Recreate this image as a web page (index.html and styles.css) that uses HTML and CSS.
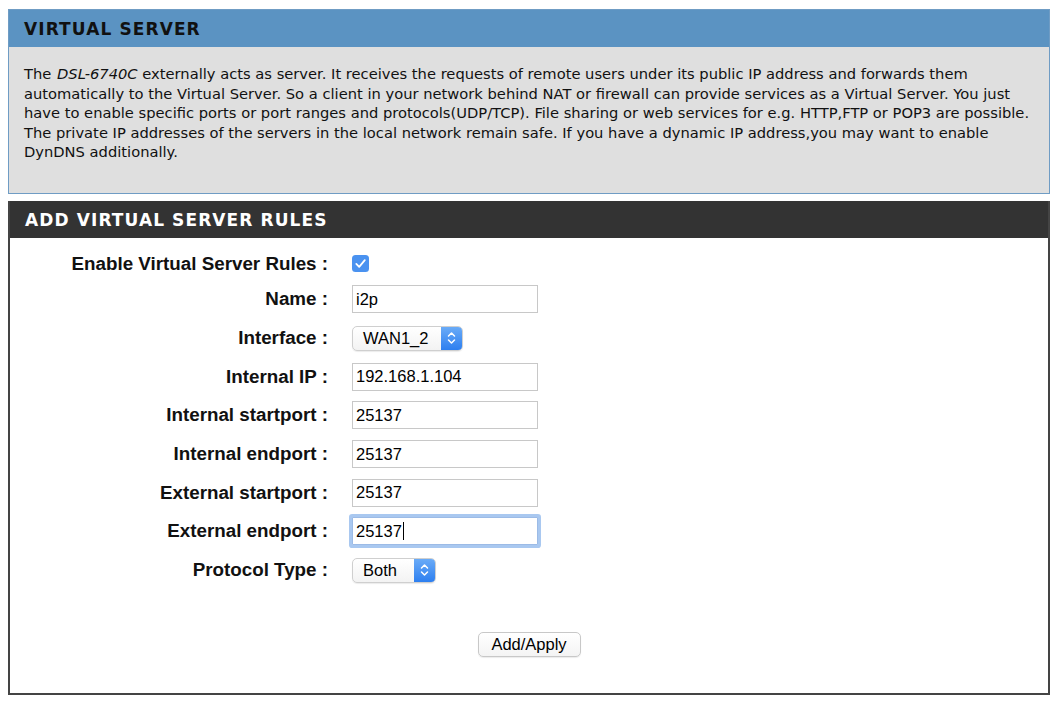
FILE: index.html
```html
<!DOCTYPE html>
<html>
<head>
<meta charset="utf-8">
<link rel="stylesheet" href="styles.css">
</head>
<body>
<div class="box info">
  <div class="box-head">VIRTUAL SERVER</div>
  <div class="box-body">
    <p class="desc">The <i class="model">DSL-6740C</i> externally acts as server. It receives the requests of remote users under its public IP address and forwards them automatically to the Virtual Server. So a client in your network behind NAT or firewall can provide services as a Virtual Server. You just have to enable specific ports or port ranges and protocols(UDP/TCP). File sharing or web services for e.g. HTTP,FTP or POP3 are possible. The private IP addresses of the servers in the local network remain safe. If you have a dynamic IP address,you may want to enable DynDNS additionally.</p>
  </div>
</div>

<div class="box rules">
  <div class="box-head dark">ADD VIRTUAL SERVER RULES</div>
  <div class="form">
    <div class="row first">
      <label class="lbl">Enable Virtual Server Rules :</label>
      <span class="check"><svg width="17" height="17" viewBox="0 0 17 17"><rect x="0" y="0" width="17" height="17" rx="3.5" fill="#4a92f0"/><path d="M4.3 8.9 L7.2 11.8 L12.8 5.2" fill="none" stroke="#fff" stroke-width="1.8" stroke-linecap="round" stroke-linejoin="round"/></svg></span>
    </div>
    <div class="row">
      <label class="lbl">Name :</label>
      <span class="input">i2p</span>
    </div>
    <div class="row">
      <label class="lbl">Interface :</label>
      <span class="select wide"><span class="sel-text">WAN1_2</span><span class="stepper"><svg width="9" height="14" viewBox="0 0 9 14"><path d="M1.5 5 L4.5 2 L7.5 5 M1.5 9 L4.5 12 L7.5 9" fill="none" stroke="#fff" stroke-width="1.5" stroke-linecap="round" stroke-linejoin="round"/></svg></span></span>
    </div>
    <div class="row">
      <label class="lbl">Internal IP :</label>
      <span class="input">192.168.1.104</span>
    </div>
    <div class="row">
      <label class="lbl">Internal startport :</label>
      <span class="input">25137</span>
    </div>
    <div class="row">
      <label class="lbl">Internal endport :</label>
      <span class="input">25137</span>
    </div>
    <div class="row">
      <label class="lbl">External startport :</label>
      <span class="input">25137</span>
    </div>
    <div class="row">
      <label class="lbl">External endport :</label>
      <span class="input focus">25137<span class="caret"></span></span>
    </div>
    <div class="row">
      <label class="lbl">Protocol Type :</label>
      <span class="select narrow"><span class="sel-text">Both</span><span class="stepper"><svg width="9" height="14" viewBox="0 0 9 14"><path d="M1.5 5 L4.5 2 L7.5 5 M1.5 9 L4.5 12 L7.5 9" fill="none" stroke="#fff" stroke-width="1.5" stroke-linecap="round" stroke-linejoin="round"/></svg></span></span>
    </div>
    <div class="actions">
      <span class="button">Add/Apply</span>
    </div>
  </div>
</div>
</body>
</html>
```
FILE: styles.css
```css
html, body {
  margin: 0;
  padding: 0;
  background: #ffffff;
}
body {
  padding: 9px 8px 0 8px;
  font-family: "DejaVu Sans", sans-serif;
  color: #000;
}
.box {
  box-sizing: border-box;
  width: 1042px;
}
.info {
  border: 1px solid #6f9cc4;
  background: #dfdfdf;
  height: 185px;
}
.box-head {
  background: #5b93c2;
  height: 37px;
  display: flex;
  align-items: center;
  padding-left: 15px;
  font-family: "DejaVu Sans", sans-serif;
  font-weight: bold;
  font-size: 17px;
  letter-spacing: 1.1px;
  color: #111;
}
.box-head.dark {
  background: #333333;
  color: #fff;
  height: 37px;
}
.box-body {
  padding: 17px 15px 0 15px;
}
.desc {
  margin: 0;
  font-size: 14.7px;
  line-height: 19.5px;
  color: #111;
}
.model {
  display: inline-block;
  padding-left: 1px;
}
.rules {
  margin-top: 7px;
  border: 2px solid #444;
  border-top: 0;
  height: 494px;
  background: #fff;
}
.form {
  padding-top: 9px;
  font-family: "Liberation Sans", Arial, sans-serif;
}
.row {
  display: flex;
  align-items: center;
  height: 38.7px;
}
.row.first {
  height: 33px;
}
.lbl {
  width: 318px;
  text-align: right;
  font-weight: bold;
  font-size: 18.8px;
  padding-right: 24px;
  color: #111;
}
.check {
  display: flex;
}
.input {
  box-sizing: border-box;
  width: 186px;
  height: 28px;
  border: 1px solid #c8c8c8;
  background: #fff;
  font-size: 16.5px;
  display: flex;
  align-items: center;
  padding-left: 3px;
  color: #000;
}
.input.focus {
  box-shadow: 0 0 0 3px #a9c8f0;
  border-color: #9cbbe6;
  border-radius: 1px;
}
.caret {
  display: inline-block;
  width: 1px;
  height: 18px;
  background: #000;
  margin-left: 1px;
}
.select {
  box-sizing: border-box;
  height: 25px;
  border: 1px solid #cfcfcf;
  border-radius: 5px;
  background: linear-gradient(#ffffff, #f3f3f3);
  display: flex;
  align-items: stretch;
  overflow: hidden;
  box-shadow: 0 1px 1px rgba(0,0,0,0.08);
  font-size: 16.5px;
}
.select.wide { width: 111px; }
.select.narrow { width: 84px; }
.sel-text {
  flex: 1;
  display: flex;
  align-items: center;
  padding-left: 10px;
}
.stepper {
  width: 21px;
  background: linear-gradient(#6aabf7, #2d7ff0);
  display: flex;
  align-items: center;
  justify-content: center;
}
.actions {
  display: flex;
  justify-content: center;
  padding-top: 42px;
}
.button {
  box-sizing: border-box;
  width: 103px;
  height: 25px;
  border: 1px solid #c8c8c8;
  border-radius: 5px;
  background: linear-gradient(#ffffff, #f4f4f4);
  display: flex;
  align-items: center;
  justify-content: center;
  font-size: 16.5px;
  box-shadow: 0 1px 1px rgba(0,0,0,0.08);
}
```
